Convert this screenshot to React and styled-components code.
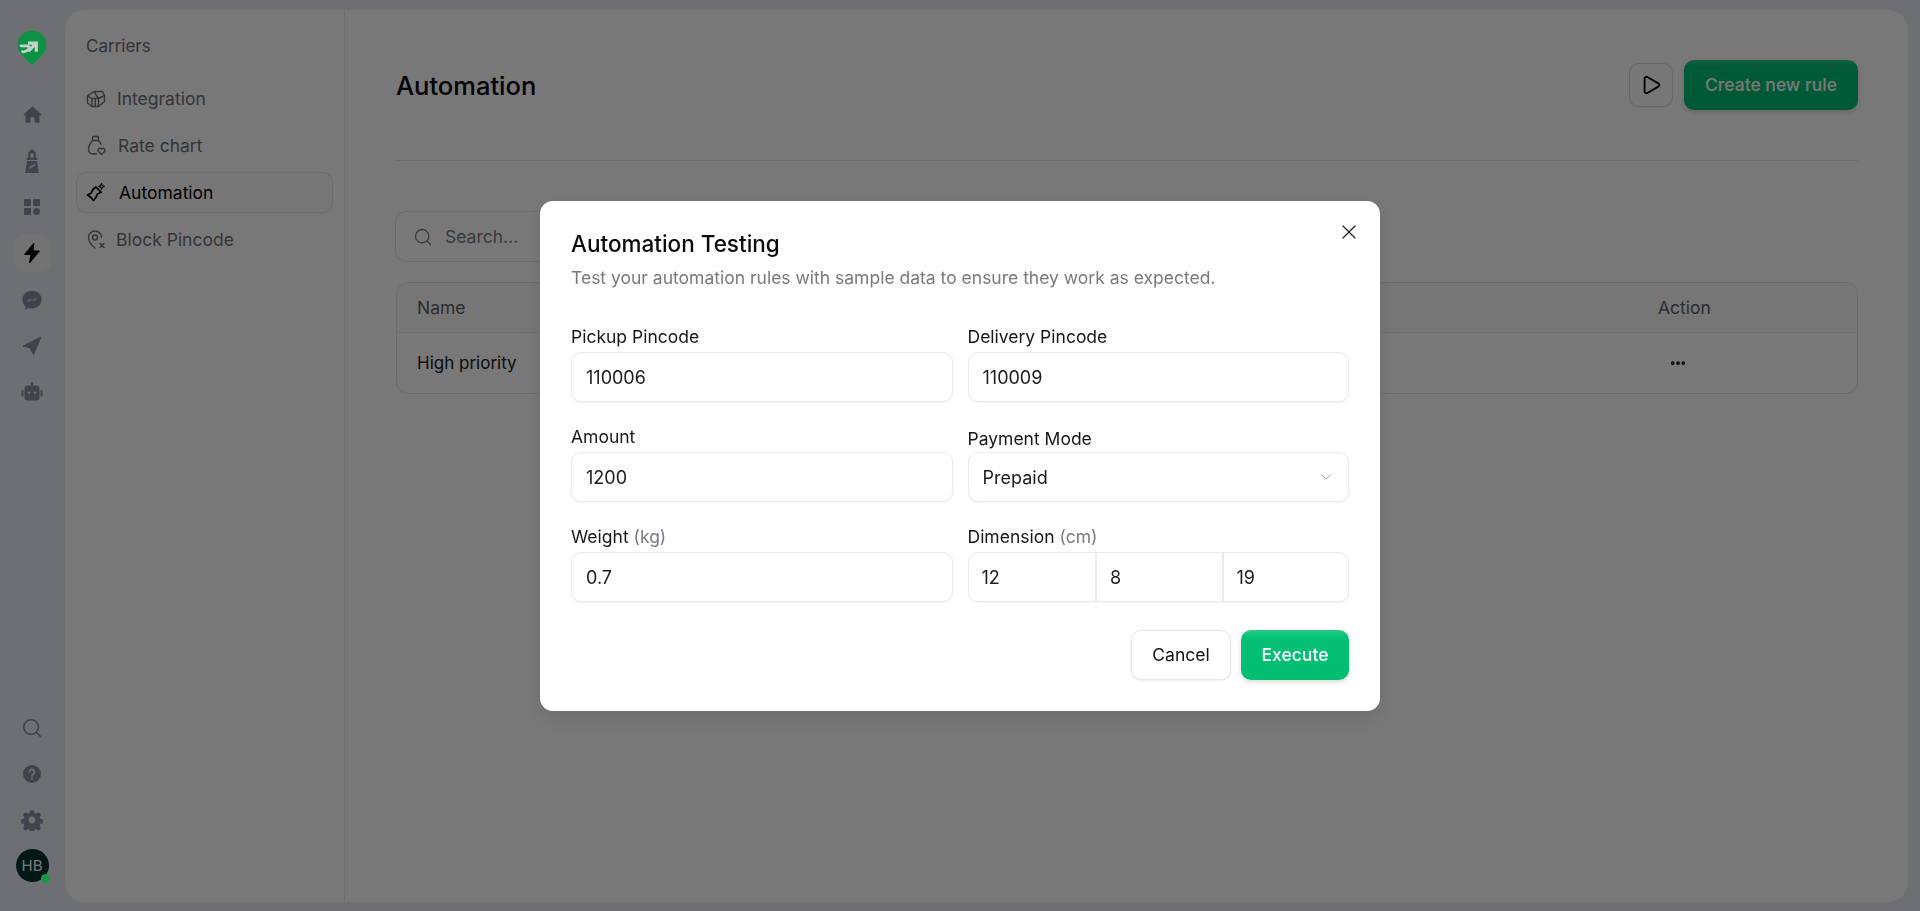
import React from "react";
import styled, { createGlobalStyle } from "styled-components";
import { ChevronDown, Search, X, Play, Ellipsis } from "lucide-react";

const Global = createGlobalStyle`
  html, body { margin: 0; padding: 0; height: 100%; }
  body { font-family: Inter, "Noto Sans", "Liberation Sans", sans-serif; background: #e9ebf5; overflow: hidden; }
  * { box-sizing: border-box; }
`;

const Page = styled.div`
  display: flex;
  height: 911px;
  width: 1920px;
  background: #e9ebf5;
  color: #0b0b0c;
`;

const Rail = styled.nav`
  width: 65px;
  flex: none;
  display: flex;
  flex-direction: column;
  align-items: center;
  padding: 30px 1px 29px 0;
`;

const Logo = styled.svg`
  position: relative;
  z-index: 10;
  width: 30px;
  height: 36px;
  margin-bottom: 30px;
`;

const RailGroup = styled.div`
  display: flex;
  flex-direction: column;
  align-items: center;
  gap: ${(p) => p.$gap}px;
`;

const RailSpacer = styled.div`
  flex: 1;
`;

const RailItem = styled.div`
  width: 37px;
  height: 37px;
  display: flex;
  align-items: center;
  justify-content: center;
  border-radius: 10px;
  color: ${(p) => (p.$active ? "#000" : "#898ca4")};
  background: ${(p) => (p.$active ? "#f4f4f6" : "transparent")};
  box-shadow: ${(p) => (p.$active ? "0 0 0 1px #eceef3, 0 1px 2px rgba(0,0,0,.05)" : "none")};
`;

const Avatar = styled.div`
  position: relative;
  width: 33px;
  height: 33px;
  border-radius: 50%;
  background: #06322f;
  color: #fff;
  display: flex;
  align-items: center;
  justify-content: center;
  font-size: 15px;
  margin-top: 11px;
`;

const AvatarDot = styled.span`
  position: absolute;
  z-index: 10;
  right: -1px;
  bottom: -1px;
  width: 9px;
  height: 9px;
  border-radius: 50%;
  background: #149a48;
`;

const Panel = styled.main`
  flex: 1;
  display: flex;
  margin: 10px 12px 9px 0;
  background: #fff;
  border-radius: 20px;
  overflow: hidden;
`;

const SidePane = styled.aside`
  width: 280px;
  flex: none;
  border-right: 1px solid #e6e7ea;
  padding: 25px 11px 0;
`;

const PaneTitle = styled.div`
  font-size: 17px;
  line-height: 22px;
  color: #6a6d75;
  padding-left: 10px;
  margin-bottom: 21px;
`;

const PaneItem = styled.div`
  display: flex;
  align-items: center;
  gap: ${(p) => p.$gap || 11}px;
  height: 41px;
  margin-bottom: 6px;
  padding-left: 10px;
  font-size: 17.5px;
  color: ${(p) => (p.$active ? "#000" : "#6f7278")};
  border-radius: 10px;
  background: ${(p) => (p.$active ? "#fbfbfc" : "transparent")};
  box-shadow: ${(p) => (p.$active ? "inset 0 0 0 1px #e4e5ea, 0 1px 2px rgba(0,0,0,.06)" : "none")};
  svg { flex: none; }
`;

const Content = styled.section`
  flex: 1;
  min-width: 0;
  padding: 0 50px 0 51px;
`;

const Header = styled.header`
  display: flex;
  align-items: center;
  justify-content: space-between;
  height: 151px;
  border-bottom: 1px solid #e6e7ea;
  margin-bottom: 51px;
`;

const PageTitle = styled.h1`
  margin: 1px 0 0;
  font-size: 25.5px;
  font-weight: 500;
  color: #000;
`;

const HeaderActions = styled.div`
  display: flex;
  align-items: center;
  gap: 11px;
  margin-bottom: 1px;
`;

const IconButton = styled.div`
  width: 44px;
  height: 44px;
  display: flex;
  align-items: center;
  justify-content: center;
  border-radius: 10px;
  background: #fdfdfd;
  box-shadow: inset 0 0 0 1px #d8d9de, 0 1px 2px rgba(0,0,0,.06);
  color: #000;
`;

const PrimaryButton = styled.div`
  display: flex;
  align-items: center;
  justify-content: center;
  height: 50px;
  width: ${(p) => p.$w}px;
  border-radius: 10px;
  font-size: 17.5px;
  font-weight: 500;
  color: #fff;
  background: linear-gradient(180deg, #2acb88 0%, #04c176 14%, #00bd72 100%);
  box-shadow: 0 2px 5px rgba(0, 0, 0, 0.16);
`;

const SearchBox = styled.div`
  display: flex;
  align-items: center;
  gap: 12px;
  width: 420px;
  height: 49px;
  padding-left: 17px;
  border-radius: 10px;
  box-shadow: 0 0 0 1px #e3e4e8;
  color: #7a7d85;
  font-size: 17.5px;
  margin-bottom: 21px;
`;

const Table = styled.div`
  border: 1px solid #e3e4e8;
  border-radius: 12px;
  overflow: hidden;
`;

const TableRow = styled.div`
  display: grid;
  grid-template-columns: 1fr 199px;
  align-items: center;
  height: ${(p) => p.$h}px;
  padding: ${(p) => (p.$head ? "0 0 1px 20px" : "0 0 0 20px")};
  font-size: ${(p) => (p.$head ? 17.5 : 17)}px;
  color: ${(p) => (p.$head ? "#5d6068" : "#1a1a1c")};
  background: ${(p) => (p.$head ? "#fafafa" : "transparent")};
  border-bottom: ${(p) => (p.$head ? "1px solid #e3e4e8" : "none")};
`;

const RowMenu = styled.div`
  display: flex;
  padding-left: 11px;
  color: #111;
`;

const Overlay = styled.div`
  position: fixed;
  inset: 0;
  background: rgba(0, 0, 0, 0.53);
  display: flex;
  align-items: center;
  justify-content: center;
`;

const Modal = styled.div`
  position: relative;
  width: 840px;
  height: 510px;
  background: #fff;
  border-radius: 13px;
  padding: 29px 31px 31px;
  box-shadow: 0 8px 24px rgba(0, 0, 0, 0.1);
`;

const CloseButton = styled.div`
  position: absolute;
  top: 19px;
  right: 19px;
  width: 24px;
  height: 24px;
  display: flex;
  align-items: center;
  justify-content: center;
  color: #222;
`;

const ModalTitle = styled.h2`
  margin: 0 0 8px;
  font-size: 22.5px;
  line-height: 28px;
  font-weight: 500;
  color: #0b0b0c;
`;

const ModalDesc = styled.p`
  margin: 0 0 36px;
  font-size: 17.5px;
  line-height: 24px;
  color: #77797f;
`;

const FormGrid = styled.div`
  display: grid;
  grid-template-columns: 1fr 1fr;
  column-gap: 15px;
  row-gap: 24px;
`;

const FieldGroup = styled.div`
  display: flex;
  flex-direction: column;
  gap: ${(p) => (p.$nudge ? 2 : 4)}px;
  padding-top: ${(p) => (p.$nudge ? 2 : 0)}px;
`;

const Label = styled.div`
  font-size: 17.5px;
  line-height: 22px;
  color: #17171a;
`;

const Unit = styled.span`
  color: #777a82;
`;

const Input = styled.div`
  display: flex;
  align-items: center;
  justify-content: space-between;
  height: 50px;
  padding: 2px 13px 0 14px;
  border: 1.5px solid #e9eaee;
  border-radius: 10px;
  background: #fff;
  font-size: 18px;
  color: #1c1c1f;
  box-shadow: 0 1px 2px rgba(0, 0, 0, 0.05);
  svg { margin-top: -2px; }
`;

const DimensionGroup = styled.div`
  display: grid;
  grid-template-columns: repeat(3, 1fr);
  height: 50px;
  border: 1.5px solid #e9eaee;
  border-radius: 10px;
  box-shadow: 0 1px 2px rgba(0, 0, 0, 0.05);
  overflow: hidden;
`;

const DimensionCell = styled.div`
  display: flex;
  align-items: center;
  padding: 2px 0 0 13px;
  font-size: 18px;
  color: #1c1c1f;
  border-left: ${(p) => (p.$first ? "none" : "2px solid #e9eaee")};
`;

const Footer = styled.div`
  display: flex;
  justify-content: flex-end;
  gap: 10px;
  margin-top: 28px;
`;

const CancelButton = styled.div`
  display: flex;
  align-items: center;
  justify-content: center;
  width: 100px;
  height: 50px;
  border: 1.5px solid #e5e6ec;
  border-radius: 10px;
  background: #fff;
  font-size: 17.5px;
  color: #111;
  box-shadow: 0 1px 2px rgba(0, 0, 0, 0.08);
`;

const Home = () => (
  <svg width="21" height="21" viewBox="0 0 24 24" fill="currentColor"><path d="M12 2.500 1.500 12.200l1.200 1.300L4 12.400V21.500h5.500v-6.500h5v6.500H20v-9.100l1.300 1.100 1.200-1.300z" /></svg>
);
const Lighthouse = () => (
  <svg width="24" height="26" viewBox="0 0 22 24" fill="currentColor"><path d="M11 1 7.500 4.200V9H6V11h10V9h-1.500V4.200zM9.500 5h3v4h-3z" fillRule="evenodd" /><path d="M6.500 12h9l1.800 11H4.700zM8 19.500l6-3.500v-1.500l-5 2.500z" fillRule="evenodd" /></svg>
);
const Grid = () => (
  <svg width="20" height="20" viewBox="0 0 20 20" fill="currentColor"><rect x="2" y="2" width="7" height="7" rx="1" /><rect x="11" y="2" width="7" height="7" rx="1" /><rect x="2" y="11" width="7" height="7" rx="1" /><circle cx="14.500" cy="14.500" r="3.500" /></svg>
);
const Bolt = () => (
  <svg width="22" height="24" viewBox="0 0 22 24" fill="currentColor" stroke="currentColor" strokeWidth="1" strokeLinejoin="round"><path d="M13 2 3.500 13.500H10L8.500 22 18.500 10H12z" /></svg>
);
const Messenger = () => (
  <svg width="22" height="22" viewBox="0 0 24 24" fill="currentColor"><path fillRule="evenodd" d="M12 2C6 2 1.500 6.300 1.500 11.800c0 2.900 1.200 5.300 3.200 7V22.500l3.500-1.900c1.200.4 2.500.6 3.800.6 6 0 10.500-4.300 10.500-9.400C22.500 6.300 18 2 12 2zM6.500 13.500l3.200-2.600 2.300 1.700 2.500-1.700 3-1-3.400 3.100-2.300-1.500-2.500 1.600z" /></svg>
);
const Send = () => (
  <svg width="22" height="22" viewBox="0 0 22 22" fill="currentColor"><path d="M20 2 2 11l7 1.800 3.500 6.700z" stroke="currentColor" strokeWidth="1" strokeLinejoin="round" /></svg>
);
const Bot = () => (
  <svg width="24" height="24" viewBox="0 0 24 24" fill="currentColor"><path fillRule="evenodd" d="M11 2h2v3.500h3.500A3 3 0 0 1 19.500 8.500v9a3 3 0 0 1-3 3h-9a3 3 0 0 1-3-3v-9a3 3 0 0 1 3-3H11zM9 11.500a1.300 1.300 0 1 0 0 2.600 1.300 1.300 0 0 0 0-2.600zm6 0a1.300 1.300 0 1 0 0 2.600 1.300 1.300 0 0 0 0-2.600z" /><rect x="1.500" y="10" width="2" height="6.500" rx="1" /><rect x="20.500" y="10" width="2" height="6.500" rx="1" /></svg>
);
const Help = () => (
  <svg width="20" height="20" viewBox="0 0 20 20"><circle cx="10" cy="10" r="9" fill="currentColor" /><path d="M7.500 7.800a2.500 2.500 0 1 1 3.800 2.200c-.9.500-1.300 1-1.300 1.800" fill="none" stroke="#e9ebf5" strokeWidth="1.700" strokeLinecap="round" /><circle cx="10" cy="14.500" r="1.100" fill="#e9ebf5" /></svg>
);
const Gear = () => (
  <svg width="22" height="22" viewBox="0 0 24 24" fill="currentColor"><path fillRule="evenodd" d="M10 1.500h4l.6 3 2 .8 2.600-1.700 2.800 2.800-1.700 2.600.8 2 3 .6v4l-3 .6-.8 2 1.700 2.600-2.800 2.800-2.600-1.700-2 .8-.6 3h-4l-.6-3-2-.8-2.600 1.700-2.800-2.800 1.700-2.600-.8-2-3-.6v-4l3-.6.8-2-1.700-2.600 2.800-2.800 2.600 1.700 2-.8zM12 8.200a3.800 3.800 0 1 0 0 7.600 3.800 3.800 0 0 0 0-7.600z" /></svg>
);
const BoxIcon = () => (
  <svg width="20" height="20" viewBox="0 0 20 20" fill="none" stroke="currentColor" strokeWidth="1.400" strokeLinejoin="round"><path d="M1.500 6.800 8 2.500h8.500l2 4v6l-6 5H6L1.500 14z" /><path d="M1.500 6.800 6 9.500V17.500M6 9.500h6.500v8M12.500 9.500l6-3M8 2.500l4.500 7M9.300 9.500v8" /></svg>
);
const BagHeart = () => (
  <svg width="22" height="22" viewBox="0 0 22 22" fill="none" stroke="currentColor" strokeWidth="1.400" strokeLinecap="round" strokeLinejoin="round"><rect x="6.500" y="1.500" width="6" height="4" rx="1.200" /><path d="M6.500 5.500C4 8.500 2.500 11 2.500 14c0 3 2 5 5 5h3M12.500 5.500c1 1.200 2 2.500 2.500 3.800" /><path d="M15.500 19.500l-3.300-3.300a2 2 0 0 1 3.300-2.200 2 2 0 0 1 3.300 2.200z" /></svg>
);
const Sparkle = () => (
  <svg width="21" height="21" viewBox="0 0 21 21" fill="none" stroke="currentColor" strokeWidth="1.700" strokeLinejoin="round"><path d="M10 5l2.500 2.700 2.700 2.500-3.700 1.700-1.700 3.800L7.500 18.500 5 15.500 1.500 13l3.500-1.700L7 7.500z" /><path d="M15.500 1.500c.3 1.800.8 2.500 2.800 2.800-2 .4-2.500 1-2.800 2.800-.3-1.800-.8-2.400-2.800-2.800 2-.3 2.500-1 2.800-2.800z" strokeWidth="1.200" /></svg>
);
const PinX = () => (
  <svg width="21" height="21" viewBox="0 0 21 21" fill="none" stroke="currentColor" strokeWidth="1.400" strokeLinecap="round"><path d="M15.500 8.500a6.500 6.500 0 0 0-13 0c0 4 3.500 8 6.500 10.500" /><circle cx="9" cy="8.500" r="2.500" /><path d="M14 14.500l4 4M18 14.500l-4 4" /></svg>
);

export default function App() {
  return (
    <>
      <Global />
      <Page>
        <Rail>
          <Logo viewBox="0 0 30 36">
            <path fill="#0f9145" d="M15 .5C7 .5.5 7 .5 15c0 4.500 2 7.700 5 10.700l9.500 9.800 9.500-9.800c3-3 5-6.200 5-10.700C29.500 7 23 .5 15 .5z" />
            <path fill="none" stroke="#c4d2ca" strokeWidth="3.200" d="M11 13.200h8.300v8.500M18.800 13.700l-7.500 7.500" />
            <path fill="none" stroke="#c4d2ca" strokeWidth="2.800" strokeLinecap="round" d="M4 15.800h6.500c1.500.3 2 2.200 1 3.600-1.500 2-3.800 2.600-6 2.300" />
          </Logo>
          <RailGroup $gap={9.3}>
            <RailItem><Home /></RailItem>
            <RailItem><Lighthouse /></RailItem>
            <RailItem><Grid /></RailItem>
            <RailItem $active><Bolt /></RailItem>
            <RailItem><Messenger /></RailItem>
            <RailItem><Send /></RailItem>
            <RailItem><Bot /></RailItem>
          </RailGroup>
          <RailSpacer />
          <RailGroup $gap={9}>
            <RailItem><Search size={22} strokeWidth={1.8} /></RailItem>
            <RailItem><Help /></RailItem>
            <RailItem><Gear /></RailItem>
          </RailGroup>
          <Avatar>HB<AvatarDot /></Avatar>
        </Rail>
        <Panel>
          <SidePane>
            <PaneTitle>Carriers</PaneTitle>
            <PaneItem><BoxIcon />Integration</PaneItem>
            <PaneItem $gap={10}><BagHeart />Rate chart</PaneItem>
            <PaneItem $active $gap={12}><Sparkle />Automation</PaneItem>
            <PaneItem $gap={9}><PinX />Block Pincode</PaneItem>
          </SidePane>
          <Content>
            <Header>
              <PageTitle>Automation</PageTitle>
              <HeaderActions>
                <IconButton><Play size={22} strokeWidth={2} /></IconButton>
                <PrimaryButton $w={174}>Create new rule</PrimaryButton>
              </HeaderActions>
            </Header>
            <SearchBox><Search size={20} strokeWidth={1.6} />Search...</SearchBox>
            <Table>
              <TableRow $head $h={50}><span>Name</span><span>Action</span></TableRow>
              <TableRow $h={60}><span>High priority</span><RowMenu><Ellipsis size={18} strokeWidth={3} /></RowMenu></TableRow>
            </Table>
          </Content>
        </Panel>
      </Page>
      <Overlay>
        <Modal>
          <CloseButton><X size={24} strokeWidth={1.3} /></CloseButton>
          <ModalTitle>Automation Testing</ModalTitle>
          <ModalDesc>Test your automation rules with sample data to ensure they work as expected.</ModalDesc>
          <FormGrid>
            <FieldGroup><Label>Pickup Pincode</Label><Input>110006</Input></FieldGroup>
            <FieldGroup><Label>Delivery Pincode</Label><Input>110009</Input></FieldGroup>
            <FieldGroup><Label>Amount</Label><Input>1200</Input></FieldGroup>
            <FieldGroup $nudge><Label>Payment Mode</Label><Input>Prepaid<ChevronDown size={18} strokeWidth={1.3} color="#9a9ca3" /></Input></FieldGroup>
            <FieldGroup><Label>Weight <Unit>(kg)</Unit></Label><Input>0.7</Input></FieldGroup>
            <FieldGroup>
              <Label>Dimension <Unit>(cm)</Unit></Label>
              <DimensionGroup>
                <DimensionCell $first>12</DimensionCell>
                <DimensionCell>8</DimensionCell>
                <DimensionCell>19</DimensionCell>
              </DimensionGroup>
            </FieldGroup>
          </FormGrid>
          <Footer>
            <CancelButton>Cancel</CancelButton>
            <PrimaryButton $w={108}>Execute</PrimaryButton>
          </Footer>
        </Modal>
      </Overlay>
    </>
  );
}
